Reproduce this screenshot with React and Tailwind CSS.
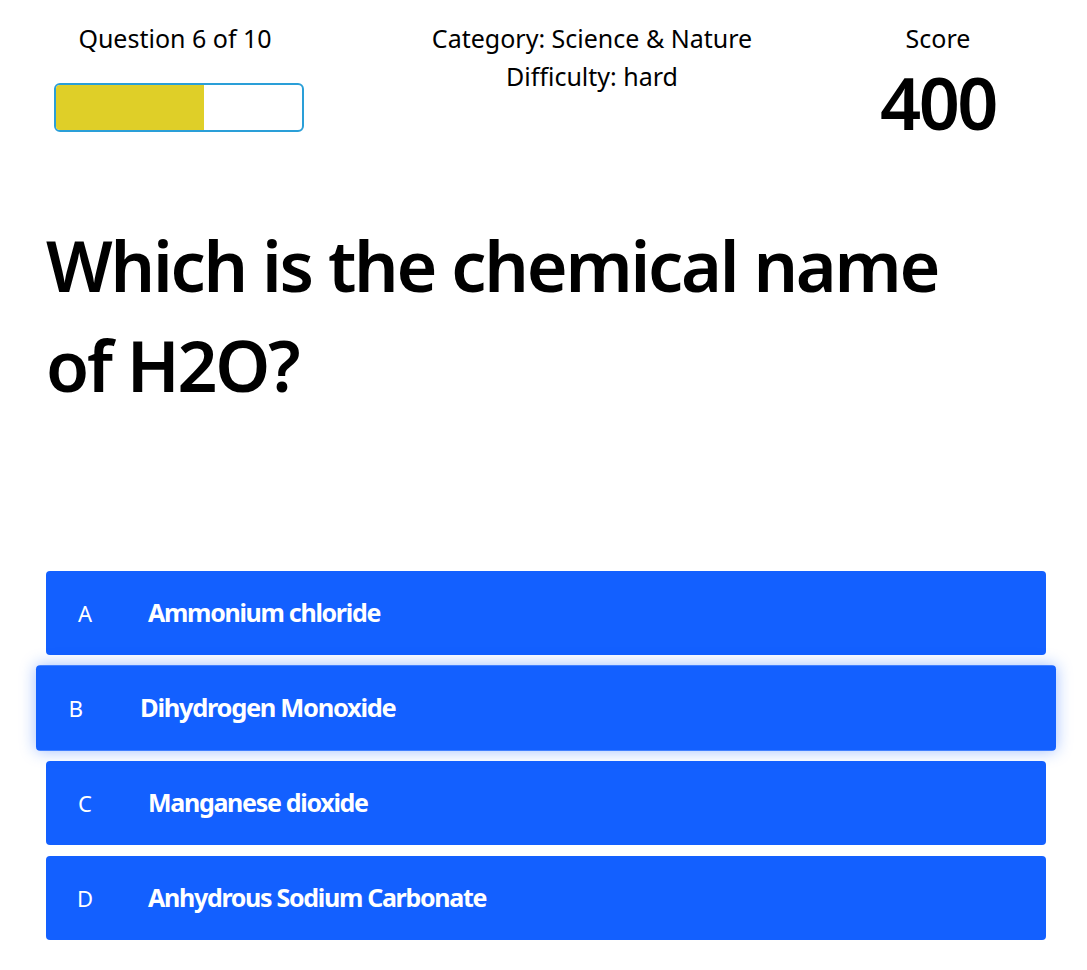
import React from 'react';

const answers = [
  { letter: 'A', text: 'Ammonium chloride' },
  { letter: 'B', text: 'Dihydrogen Monoxide', hovered: true },
  { letter: 'C', text: 'Manganese dioxide' },
  { letter: 'D', text: 'Anhydrous Sodium Carbonate' },
];

const App = () => {
  const progress = 60; // question 6 of 10

  return (
    <div className="min-h-screen bg-white text-black font-['Noto_Sans','Open_Sans',sans-serif]">
      {/* Header */}
      <div className="flex pt-[19px] pl-[54px]">
        <div className="w-[250px] flex flex-col">
          <p className="text-[25px] leading-[38px] text-center pr-[8px]">Question 6 of 10</p>
          <div className="mt-[26px] h-[49px] rounded-[6px] border-2 border-[#2a9fd8] overflow-hidden bg-white">
            <div className="h-full bg-[#dfcf28]" style={{ width: `${progress}%` }} />
          </div>
        </div>

        <div className="ml-[118px] w-[340px] text-center text-[25px] leading-[38px]">
          <p>Category: Science &amp; Nature</p>
          <p>Difficulty: hard</p>
        </div>

        <div className="ml-[118px] w-[116px] text-center">
          <p className="text-[25px] leading-[38px]">Score</p>
          <p className="mt-[9px] pr-[2px] text-[72px] font-semibold tracking-[-2.5px] leading-none">400</p>
        </div>
      </div>

      {/* Question */}
      <h1 className="ml-[46px] max-w-[960px] mt-[77px] text-[70px] font-semibold tracking-[-2.2px] leading-[100px]">
        Which is the chemical name of H2O?
      </h1>

      {/* Answers */}
      <div className="pl-[46px] pr-[41px] mt-[156px] flex flex-col gap-[11px] pb-[29px]">
        {answers.map((a) => (
          <button
            key={a.letter}
            className={`h-[84px] w-full flex items-center rounded-[4px] bg-[#1360ff] text-white text-left ${
              a.hovered ? 'scale-x-[1.02] scale-y-[1.02] shadow-[0_0_16px_rgba(19,96,255,0.4)]' : ''
            }`}
          >
            <span className="ml-[24px] w-[30px] text-center text-[22px]">{a.letter}</span>
            <span className="ml-[48px] text-[25px] font-bold tracking-[-1.3px]">{a.text}</span>
          </button>
        ))}
      </div>
    </div>
  );
};

export default App;
